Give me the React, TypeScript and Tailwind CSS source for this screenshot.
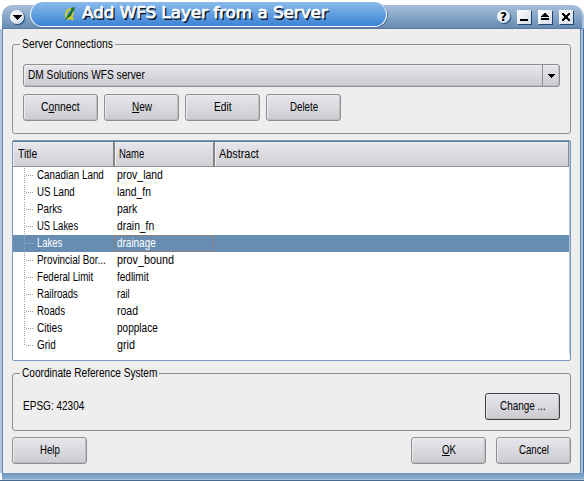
import React, { useLayoutEffect, useRef } from "react";

function T({ w, children, className = "" }: { w: number; children: React.ReactNode; className?: string }) {
  const ref = useRef<HTMLSpanElement>(null);
  useLayoutEffect(() => {
    const el = ref.current;
    if (el) el.style.transform = `scaleX(${w / el.offsetWidth})`;
  }, [w]);
  return (
    <span className="block shrink-0" style={{ width: w }}>
      <span ref={ref} className={`inline-block origin-left whitespace-pre ${className}`}>
        {children}
      </span>
    </span>
  );
}

function Button({ w, children, className = "border-[#8f8f8f]" }: { w: number; children: React.ReactNode; className?: string }) {
  return (
    <button
      className={`flex h-[27px] w-[75px] shrink-0 items-center justify-center rounded-[3px] border bg-linear-to-b from-[#e6e6ec] to-[#cbcbd0] shadow-[inset_1px_1px_0_#ededf1,inset_-1px_-1px_0_#bdbdc2] ${className}`}
    >
      <T w={w}>{children}</T>
    </button>
  );
}

function Group({ title, w, className, children }: { title: string; w: number; className: string; children: React.ReactNode }) {
  return (
    <section className={`relative w-[559px] shrink-0 rounded-[3px] border border-[#8f8f8f] ${className}`}>
      <div className="absolute -top-[9px] left-[7px] bg-[#eeeeee] px-[2px]">
        <T w={w}>{title}</T>
      </div>
      {children}
    </section>
  );
}

function WinButton({ children }: { children: React.ReactNode }) {
  return (
    <div className="h-[14px] w-[14px] bg-linear-to-br from-white to-[#d3dce8] shadow-[1px_1px_0_#1d4674]">
      <svg viewBox="0 0 14 14" className="block h-[14px] w-[14px]" shapeRendering="crispEdges">
        {children}
      </svg>
    </div>
  );
}

const rows: [string, number, string, number][] = [
  ["Canadian Land", 67, "prov_land", 46],
  ["US Land", 38, "land_fn", 34],
  ["Parks", 25, "park", 20],
  ["US Lakes", 41, "drain_fn", 37],
  ["Lakes", 25, "drainage", 39],
  ["Provincial Bor...", 69, "prov_bound", 57],
  ["Federal Limit", 56, "fedlimit", 32],
  ["Railroads", 41, "rail", 13],
  ["Roads", 28, "road", 21],
  ["Cities", 25, "popplace", 41],
  ["Grid", 19, "grid", 18],
];

const headCell =
  "flex h-[25px] items-center border-b border-[#8f8f8f] bg-linear-to-b from-[#e6e6ec] to-[#cfcfd4] pl-[5px] shadow-[inset_1px_1px_0_#f0f0f3]";

export default function App() {
  return (
    <div className="relative h-[481px] w-[584px] overflow-hidden bg-white font-['Liberation_Sans',sans-serif] text-[12.5px] leading-[17px] text-black">
      <div className="flex h-full flex-col pt-[5px]">
        <header className="ml-[2px] flex h-[24px] shrink-0 items-center rounded-tl-[10px] rounded-tr-[12px] border-r-2 border-b border-r-[#a9c3de] border-b-[#55799f] bg-linear-to-b from-[#a7c0da] to-[#668bb2] pr-[9px] pl-[8px]">
          <div className="flex h-[14px] w-[14px] items-center justify-center rounded-full bg-linear-to-br from-white to-[#cbd7e4] shadow-[1px_1px_1px_#1d4674]">
            <svg viewBox="0 0 9 5" className="mt-px h-[5px] w-[9px]" shapeRendering="crispEdges">
              <path d="M0 0h9v1H8v1H7v1H6v1H5v1H4V4H3V3H2V2H1V1H0z" />
            </svg>
          </div>
          <div className="flex-1" />
          <div className="flex items-center gap-[7px]">
            <div className="flex h-[13px] w-[13px] items-center justify-center rounded-full bg-linear-to-br from-white to-[#d3dce8] font-['DejaVu_Sans',sans-serif] text-[12px] leading-none font-bold shadow-[1px_1px_1px_#1d4674]">
              ?
            </div>
            <WinButton>
              <path d="M3 9h8v2H3z" />
            </WinButton>
            <WinButton>
              <path d="M6 3h2v1h1v1h1v1h1v1H3V6h1V5h1V4h1zM3 8h8v2H3z" />
            </WinButton>
            <WinButton>
              <path d="M3 3h2v1h1v1h2V4h1V3h2v2h-1v1H9v2h1v1h1v2H9v-1H8V9H6v1H5v1H3V9h1V8h1V6H4V5H3z" />
            </WinButton>
          </div>
        </header>

        <div className="flex flex-1 border-l-2 border-[#b3c8de]">
          <main className="flex w-[579px] flex-col border-x border-[#5f88b2] bg-[#eeeeee] pt-[15px] pl-[9px]">
            <Group title="Server Connections" w={91} className="flex h-[90px] flex-col gap-[7px] pt-[19px] pl-[10px]">
              <div className="flex h-[23px] w-[537px] shrink-0 items-center rounded-[3px] border border-[#8f8f8f] bg-linear-to-b from-[#e6e6ec] to-[#cbcbd0] pl-[4px] shadow-[inset_1px_1px_0_#ededf1,inset_-1px_-1px_0_#bdbdc2]">
                <T w={117}>DM Solutions WFS server</T>
                <div className="ml-auto flex h-full w-[17px] items-center justify-center border-l border-[#8f8f8f]">
                  <svg viewBox="0 0 7 4" className="h-[4px] w-[7px]" shapeRendering="crispEdges">
                    <path d="M0 0h7v1H6v1H5v1H4v1H3V3H2V2H1V1H0z" />
                  </svg>
                </div>
              </div>
              <div className="flex gap-[6px]">
                <Button w={39}>
                  C<u>o</u>nnect
                </Button>
                <Button w={20}>
                  <u>N</u>ew
                </Button>
                <Button w={18}>Edit</Button>
                <Button w={28}>Delete</Button>
              </div>
            </Group>

            <div className="mt-[6px] h-[221px] w-[559px] shrink-0 rounded-[2px] border border-[#7399bf] bg-white">
              <div className="flex flex-col border-t border-r border-t-[#5c7a98] border-r-[#b5c6d8]">
                <div className="flex">
                  <div className={`${headCell} w-[100px]`}>
                    <T w={19}>Title</T>
                  </div>
                  <div className="w-[2px] bg-[#858585]" />
                  <div className={`${headCell} w-[98px] pl-[4px]!`}>
                    <T w={25}>Name</T>
                  </div>
                  <div className="w-[2px] bg-[#858585]" />
                  <div className={`${headCell} flex-1 border-r pl-[4px]!`}>
                    <T w={40}>Abstract</T>
                  </div>
                </div>
                {rows.map(([title, tw, name, nw], i) => {
                  const selected = i === 4;
                  return (
                    <div key={title} className={`flex h-[17px] ${selected ? "bg-[#678db2] text-white" : ""}`}>
                      <div className="flex w-[101px] shrink-0 pl-[11px]">
                        <svg viewBox="0 0 13 17" className="h-[17px] w-[13px] shrink-0" shapeRendering="crispEdges">
                          <path
                            d={i === rows.length - 1 ? "M.5 1V9" : "M.5 1V17"}
                            stroke={selected ? "#8dabc8" : "#a0a0a0"}
                            strokeDasharray="1 1"
                          />
                          <path d="M2 8.5H10" stroke={selected ? "#9ab5ce" : "#a0a0a0"} strokeDasharray="1 1" />
                        </svg>
                        <T w={tw}>{title}</T>
                      </div>
                      <div
                        className={`flex w-[100px] shrink-0 items-center pl-[3px] ${selected ? "outline -outline-offset-1 outline-dotted outline-[#b0774a]" : ""}`}
                      >
                        <T w={nw}>{name}</T>
                      </div>
                    </div>
                  );
                })}
              </div>
            </div>

            <Group title="Coordinate Reference System" w={135} className="mt-[12px] flex h-[58px] items-center pt-[9px] pr-[10px] pl-[10px]">
              <T w={61}>EPSG: 42304</T>
              <div className="ml-auto">
                <Button w={46} className="border-[#3c3c3c]">
                  Change ...
                </Button>
              </div>
            </Group>

            <footer className="mt-[6px] flex w-[559px]">
              <Button w={20}>Help</Button>
              <div className="ml-auto flex gap-[10px]">
                <Button w={14}>
                  <u>O</u>K
                </Button>
                <Button w={30}>Cancel</Button>
              </div>
            </footer>
          </main>
          <div className="w-[2px] bg-[#a9c3de]" />
          <div className="w-px bg-[#486a8e]" />
        </div>
        <div className="ml-[2px] h-[6px] shrink-0 bg-linear-to-b from-[#7197be] to-[#8badd0]" />
        <div className="ml-[2px] h-px shrink-0 bg-[#a9c3de]" />
        <div className="h-px shrink-0 bg-[#486a8e]" />
      </div>

      <div className="absolute top-[2px] left-[30px] flex h-[25px] w-[357px] items-center rounded-[13px] border-[1.5px] border-t-0 border-white bg-linear-to-b from-[#8abaea] to-[#3983d6] pl-[32px] shadow-[1px_1px_1px_#557799]">
        <svg viewBox="0 0 13 16" className="mr-[6px] h-[16px] w-[13px]">
          <ellipse cx="6.3" cy="8" rx="3.2" ry="4.8" fill="none" stroke="#d5ce20" strokeWidth="2" transform="rotate(14 6.3 8)" />
          <path d="M6.5 9.5l3.5 4.5" stroke="#d5ce20" strokeWidth="2.2" />
          <path d="M11.5.8L7.8 2.5l.6 1.3L5 9l-3.5 5.5L8 9.8l2.2-5 1.2.3z" fill="#16702b" />
        </svg>
        <T
          w={246}
          className="font-['DejaVu_Sans',sans-serif] text-[15px] text-white [-webkit-text-stroke:0.6px_white] [text-shadow:1.5px_1.5px_0_#111]"
        >
          Add WFS Layer from a Server
        </T>
      </div>
    </div>
  );
}
